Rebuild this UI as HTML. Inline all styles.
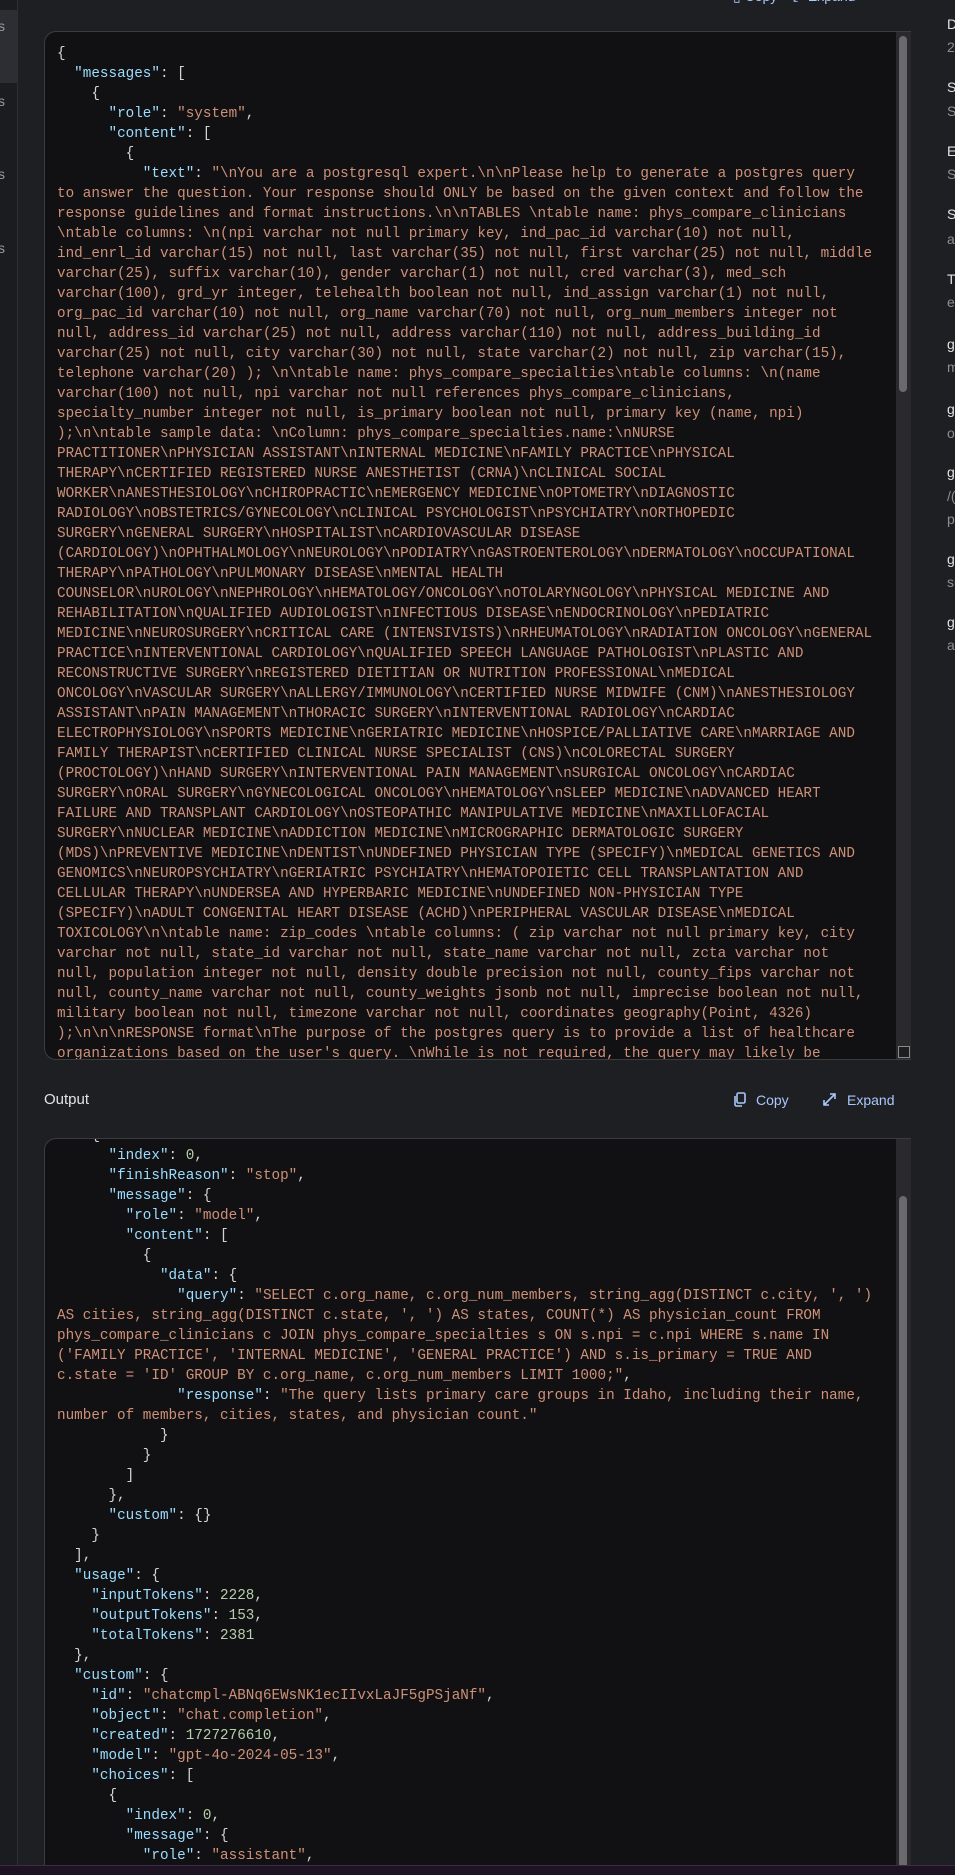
<!DOCTYPE html>
<html><head><meta charset="utf-8">
<style>
*{margin:0;padding:0;box-sizing:border-box}
html,body{width:955px;height:1875px;overflow:hidden;background:#1e1f23}
body{position:relative;font-family:"Liberation Sans",sans-serif}
.side{position:absolute;left:0;top:0;width:18px;height:1865px;background:#1b1c20;border-right:1px solid #2e2f34}
.side .act{position:absolute;left:0;top:10px;width:18px;height:73px;background:#2d2e33}
.side span{position:absolute;left:-2px;color:#9a9a9a;font-size:14px}
.box{position:absolute;left:44px;width:867px;background:#111114;border:1px solid #3b3c41;border-right:none;border-radius:12px 0 0 12px;overflow:hidden}
pre{font-family:"Liberation Mono",monospace;font-size:14.3px;line-height:20px;color:#d4d4d4;white-space:pre;position:absolute;left:12px}
.k{color:#9cdcfe}.s{color:#ce9178}.n{color:#b5cea8}
.sb{position:absolute;right:0;top:0;width:15px;bottom:0;background:#2a2a2c}
.th{position:absolute;left:3px;width:8px;background:#6a6a6c;border-radius:4px}
.lbl{position:absolute;left:44px;top:1091px;color:#e3e3e3;font-size:15px}
.btn{position:absolute;top:1092px;color:#a8c7fa;font-size:14px}
.rp{position:absolute;left:947px;top:0;width:40px;height:700px;font-size:14px}
.rp div{position:absolute;left:0;white-space:nowrap}
.t{color:#e3e3e3}.g{color:#8e8e8e}
</style></head><body>
<div class="side"><div class="act"></div>
<span style="top:18px">s</span><span style="top:93px">s</span><span style="top:166px">s</span><span style="top:240px">s</span></div>

<div style="position:absolute;left:56px;top:-14px;color:#d4d4d4;font-family:'Liberation Mono',monospace;font-size:14px">{</div>
<div style="position:absolute;left:733px;top:-12px;color:#a8c7fa;font-size:14px">▯ Copy&nbsp;&nbsp;&nbsp;&nbsp;⤢ Expand</div>

<div class="box" style="top:31px;height:1029px">
<pre style="top:12px">{
  <span class="k">"messages"</span>: [
    {
      <span class="k">"role"</span>: <span class="s">"system"</span>,
      <span class="k">"content"</span>: [
        {
          <span class="k">"text"</span>: <span class="s">"\nYou are a postgresql expert.\n\nPlease help to generate a postgres query
to answer the question. Your response should ONLY be based on the given context and follow the
response guidelines and format instructions.\n\nTABLES \ntable name: phys_compare_clinicians
\ntable columns: \n(npi varchar not null primary key, ind_pac_id varchar(10) not null,
ind_enrl_id varchar(15) not null, last varchar(35) not null, first varchar(25) not null, middle
varchar(25), suffix varchar(10), gender varchar(1) not null, cred varchar(3), med_sch
varchar(100), grd_yr integer, telehealth boolean not null, ind_assign varchar(1) not null,
org_pac_id varchar(10) not null, org_name varchar(70) not null, org_num_members integer not
null, address_id varchar(25) not null, address varchar(110) not null, address_building_id
varchar(25) not null, city varchar(30) not null, state varchar(2) not null, zip varchar(15),
telephone varchar(20) ); \n\ntable name: phys_compare_specialties\ntable columns: \n(name
varchar(100) not null, npi varchar not null references phys_compare_clinicians,
specialty_number integer not null, is_primary boolean not null, primary key (name, npi)
);\n\ntable sample data: \nColumn: phys_compare_specialties.name:\nNURSE
PRACTITIONER\nPHYSICIAN ASSISTANT\nINTERNAL MEDICINE\nFAMILY PRACTICE\nPHYSICAL
THERAPY\nCERTIFIED REGISTERED NURSE ANESTHETIST (CRNA)\nCLINICAL SOCIAL
WORKER\nANESTHESIOLOGY\nCHIROPRACTIC\nEMERGENCY MEDICINE\nOPTOMETRY\nDIAGNOSTIC
RADIOLOGY\nOBSTETRICS/GYNECOLOGY\nCLINICAL PSYCHOLOGIST\nPSYCHIATRY\nORTHOPEDIC
SURGERY\nGENERAL SURGERY\nHOSPITALIST\nCARDIOVASCULAR DISEASE
(CARDIOLOGY)\nOPHTHALMOLOGY\nNEUROLOGY\nPODIATRY\nGASTROENTEROLOGY\nDERMATOLOGY\nOCCUPATIONAL
THERAPY\nPATHOLOGY\nPULMONARY DISEASE\nMENTAL HEALTH
COUNSELOR\nUROLOGY\nNEPHROLOGY\nHEMATOLOGY/ONCOLOGY\nOTOLARYNGOLOGY\nPHYSICAL MEDICINE AND
REHABILITATION\nQUALIFIED AUDIOLOGIST\nINFECTIOUS DISEASE\nENDOCRINOLOGY\nPEDIATRIC
MEDICINE\nNEUROSURGERY\nCRITICAL CARE (INTENSIVISTS)\nRHEUMATOLOGY\nRADIATION ONCOLOGY\nGENERAL
PRACTICE\nINTERVENTIONAL CARDIOLOGY\nQUALIFIED SPEECH LANGUAGE PATHOLOGIST\nPLASTIC AND
RECONSTRUCTIVE SURGERY\nREGISTERED DIETITIAN OR NUTRITION PROFESSIONAL\nMEDICAL
ONCOLOGY\nVASCULAR SURGERY\nALLERGY/IMMUNOLOGY\nCERTIFIED NURSE MIDWIFE (CNM)\nANESTHESIOLOGY
ASSISTANT\nPAIN MANAGEMENT\nTHORACIC SURGERY\nINTERVENTIONAL RADIOLOGY\nCARDIAC
ELECTROPHYSIOLOGY\nSPORTS MEDICINE\nGERIATRIC MEDICINE\nHOSPICE/PALLIATIVE CARE\nMARRIAGE AND
FAMILY THERAPIST\nCERTIFIED CLINICAL NURSE SPECIALIST (CNS)\nCOLORECTAL SURGERY
(PROCTOLOGY)\nHAND SURGERY\nINTERVENTIONAL PAIN MANAGEMENT\nSURGICAL ONCOLOGY\nCARDIAC
SURGERY\nORAL SURGERY\nGYNECOLOGICAL ONCOLOGY\nHEMATOLOGY\nSLEEP MEDICINE\nADVANCED HEART
FAILURE AND TRANSPLANT CARDIOLOGY\nOSTEOPATHIC MANIPULATIVE MEDICINE\nMAXILLOFACIAL
SURGERY\nNUCLEAR MEDICINE\nADDICTION MEDICINE\nMICROGRAPHIC DERMATOLOGIC SURGERY
(MDS)\nPREVENTIVE MEDICINE\nDENTIST\nUNDEFINED PHYSICIAN TYPE (SPECIFY)\nMEDICAL GENETICS AND
GENOMICS\nNEUROPSYCHIATRY\nGERIATRIC PSYCHIATRY\nHEMATOPOIETIC CELL TRANSPLANTATION AND
CELLULAR THERAPY\nUNDERSEA AND HYPERBARIC MEDICINE\nUNDEFINED NON-PHYSICIAN TYPE
(SPECIFY)\nADULT CONGENITAL HEART DISEASE (ACHD)\nPERIPHERAL VASCULAR DISEASE\nMEDICAL
TOXICOLOGY\n\ntable name: zip_codes \ntable columns: ( zip varchar not null primary key, city
varchar not null, state_id varchar not null, state_name varchar not null, zcta varchar not
null, population integer not null, density double precision not null, county_fips varchar not
null, county_name varchar not null, county_weights jsonb not null, imprecise boolean not null,
military boolean not null, timezone varchar not null, coordinates geography(Point, 4326)
);\n\n\nRESPONSE format\nThe purpose of the postgres query is to provide a list of healthcare
organizations based on the user's query. \nWhile is not required, the query may likely be
include a WHERE clause</span></pre>
<div class="sb"><div class="th" style="top:4px;height:356px"></div></div>
<div style="position:absolute;right:1px;bottom:1px;width:12px;height:12px;border:1px solid #8a8a8a;background:#1e1e1e"></div>
</div>

<div class="lbl">Output</div>
<div class="btn" style="left:733px"><svg width="14" height="15" viewBox="0 0 14 15" style="vertical-align:-2px;margin-right:9px"><rect x="4" y="1" width="8" height="10" rx="1.5" fill="none" stroke="#a8c7fa" stroke-width="1.6"/><path d="M2 4v8.5a1.5 1.5 0 0 0 1.5 1.5H9" fill="none" stroke="#a8c7fa" stroke-width="1.6"/></svg>Copy</div>
<div class="btn" style="left:822px"><svg width="15" height="15" viewBox="0 0 15 15" style="vertical-align:-2px;margin-right:10px"><path d="M2 13L13 2M8 2h5v5M2 8v5h5" fill="none" stroke="#a8c7fa" stroke-width="1.6"/></svg>Expand</div>

<div class="box" style="top:1138px;height:740px;border-bottom:none;border-radius:12px 0 0 0">
<pre style="top:-13px">    {
      <span class="k">"index"</span>: <span class="n">0</span>,
      <span class="k">"finishReason"</span>: <span class="s">"stop"</span>,
      <span class="k">"message"</span>: {
        <span class="k">"role"</span>: <span class="s">"model"</span>,
        <span class="k">"content"</span>: [
          {
            <span class="k">"data"</span>: {
              <span class="k">"query"</span>: <span class="s">"SELECT c.org_name, c.org_num_members, string_agg(DISTINCT c.city, ', ')
AS cities, string_agg(DISTINCT c.state, ', ') AS states, COUNT(*) AS physician_count FROM
phys_compare_clinicians c JOIN phys_compare_specialties s ON s.npi = c.npi WHERE s.name IN
('FAMILY PRACTICE', 'INTERNAL MEDICINE', 'GENERAL PRACTICE') AND s.is_primary = TRUE AND
c.state = 'ID' GROUP BY c.org_name, c.org_num_members LIMIT 1000;"</span>,
              <span class="k">"response"</span>: <span class="s">"The query lists primary care groups in Idaho, including their name,
number of members, cities, states, and physician count."</span>
            }
          }
        ]
      },
      <span class="k">"custom"</span>: {}
    }
  ],
  <span class="k">"usage"</span>: {
    <span class="k">"inputTokens"</span>: <span class="n">2228</span>,
    <span class="k">"outputTokens"</span>: <span class="n">153</span>,
    <span class="k">"totalTokens"</span>: <span class="n">2381</span>
  },
  <span class="k">"custom"</span>: {
    <span class="k">"id"</span>: <span class="s">"chatcmpl-ABNq6EWsNK1ecIIvxLaJF5gPSjaNf"</span>,
    <span class="k">"object"</span>: <span class="s">"chat.completion"</span>,
    <span class="k">"created"</span>: <span class="n">1727276610</span>,
    <span class="k">"model"</span>: <span class="s">"gpt-4o-2024-05-13"</span>,
    <span class="k">"choices"</span>: [
      {
        <span class="k">"index"</span>: <span class="n">0</span>,
        <span class="k">"message"</span>: {
          <span class="k">"role"</span>: <span class="s">"assistant"</span>,
          <span class="k">"content"</span>: <span class="s">"..."</span></pre>
<div class="sb"><div class="th" style="top:57px;height:700px"></div></div>
</div>

<div class="rp">
<div class="t" style="top:16px">Date</div><div class="g" style="top:39px">2024</div>
<div class="t" style="top:79px">Source</div><div class="g" style="top:103px">Sys</div>
<div class="t" style="top:143px">Env</div><div class="g" style="top:166px">Sys</div>
<div class="t" style="top:206px">Status</div><div class="g" style="top:231px">ab</div>
<div class="t" style="top:271px">Ti</div><div class="g" style="top:294px">ee</div>
<div class="t" style="top:336px">gen</div><div class="g" style="top:359px">mo</div>
<div class="t" style="top:401px">gen</div><div class="g" style="top:425px">ok</div>
<div class="t" style="top:464px">gen</div><div class="g" style="top:488px">/(</div><div class="g" style="top:511px">pr</div>
<div class="t" style="top:551px">gen</div><div class="g" style="top:574px">su</div>
<div class="t" style="top:614px">gen</div><div class="g" style="top:637px">ab</div>
</div>

<div style="position:absolute;left:0;top:1865px;width:955px;height:10px;background:#1d1322;border-top:1px solid #3b2a48"></div>
</body></html>
